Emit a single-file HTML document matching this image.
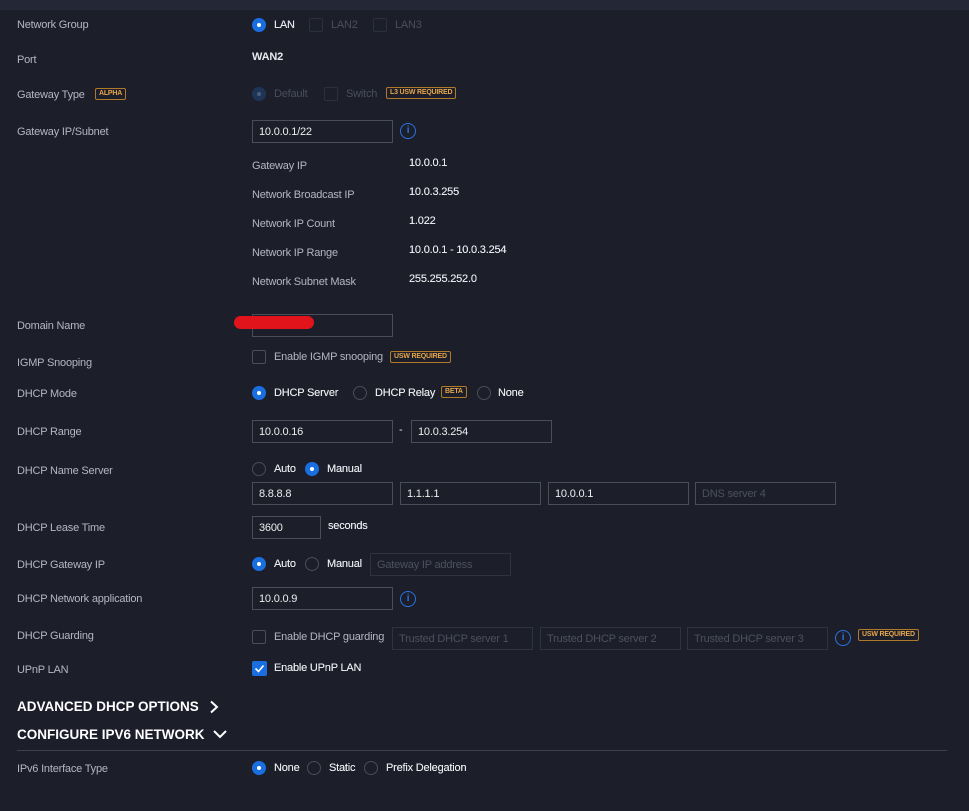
<!DOCTYPE html>
<html><head><meta charset="utf-8"><style>
*{box-sizing:border-box;margin:0;padding:0}
body{width:969px;height:811px;background:#1c1e2a;font-family:"Liberation Sans",sans-serif;font-size:11px;color:#e8e9ee;position:relative;overflow:hidden;letter-spacing:-0.2px}
.top{position:absolute;left:0;top:0;width:969px;height:10px;background:#242735}
.a{position:absolute;line-height:14px;white-space:nowrap}
.l{color:#b4b7c2}
.d{color:#4a4d5c}
.v{font-weight:500;text-shadow:0 0 0.3px #fff}
.in{position:absolute;height:23px;border:1px solid #4a4d5a;background:#1c1e2a;padding:2px 0 0 6px;line-height:19px;color:#eee;font-size:11px}
.in.ph{color:#4d505e;border-color:#2f3240}
.r{position:absolute;width:14px;height:14px;border-radius:50%;border:1px solid #4a4d5a}
.r.on{background:#1a6fe0;border:none}
.r.on::after{content:"";position:absolute;left:5px;top:5px;width:4px;height:4px;border-radius:50%;background:#fff}
.r.dison{background:#1f3558;border:none}
.r.dison::after{content:"";position:absolute;left:5px;top:5px;width:4px;height:4px;border-radius:50%;background:#4c5e7c}
.c{position:absolute;width:14px;height:14px;border:1px solid #4a4d5a;border-radius:2px}
.c.dis{border-color:#2c2f3c}
.b{position:absolute;height:12px;border:1px solid #b07a2a;border-radius:2px;color:#e6a64a;font-size:7px;font-weight:bold;line-height:10px;padding:0 3px;display:flex;align-items:center}
.i{position:absolute;width:16px;height:16px;border-radius:50%;border:1px solid #2a74e0;color:#2a74e0;font-size:10px;text-align:center;line-height:14px;font-weight:bold}
.h{position:absolute;font-size:13.5px;font-weight:bold;color:#fff;letter-spacing:0}
</style></head><body>
<div class="top"></div>

<div class="a l" style="left:17px;top:18px">Network Group</div>
<div class="r on" style="left:252px;top:18px"></div><div class="a v" style="left:274px;top:18px">LAN</div>
<div class="c dis" style="left:309px;top:18px"></div><div class="a d" style="left:331px;top:18px">LAN2</div>
<div class="c dis" style="left:373px;top:18px"></div><div class="a d" style="left:395px;top:18px">LAN3</div>

<div class="a l" style="left:17px;top:53px">Port</div>
<div class="a" style="left:252px;top:50px;font-weight:bold">WAN2</div>

<div class="a l" style="left:17px;top:88px">Gateway Type</div>
<div class="b" style="left:95px;top:88px">ALPHA</div>
<div class="r dison" style="left:252px;top:87px"></div><div class="a d" style="left:274px;top:87px">Default</div>
<div class="c dis" style="left:324px;top:87px"></div><div class="a d" style="left:346px;top:87px">Switch</div>
<div class="b" style="left:386px;top:87px">L3 USW REQUIRED</div>

<div class="a l" style="left:17px;top:125px">Gateway IP/Subnet</div>
<div class="in" style="left:252px;top:120px;width:141px">10.0.0.1/22</div>
<div class="i" style="left:400px;top:123px">i</div>

<div class="a l" style="left:252px;top:159px">Gateway IP</div><div class="a v" style="left:409px;top:156px">10.0.0.1</div>
<div class="a l" style="left:252px;top:188px">Network Broadcast IP</div><div class="a v" style="left:409px;top:185px">10.0.3.255</div>
<div class="a l" style="left:252px;top:217px">Network IP Count</div><div class="a v" style="left:409px;top:214px">1.022</div>
<div class="a l" style="left:252px;top:246px">Network IP Range</div><div class="a v" style="left:409px;top:243px">10.0.0.1 - 10.0.3.254</div>
<div class="a l" style="left:252px;top:275px">Network Subnet Mask</div><div class="a v" style="left:409px;top:272px">255.255.252.0</div>

<div class="a l" style="left:17px;top:319px">Domain Name</div>
<div class="in" style="left:252px;top:314px;width:141px"></div>
<div style="position:absolute;left:234px;top:316px;width:80px;height:13px;border-radius:7px;background:#e0141a"></div>

<div class="a l" style="left:17px;top:356px">IGMP Snooping</div>
<div class="c" style="left:252px;top:350px"></div><div class="a l" style="left:274px;top:350px">Enable IGMP snooping</div>
<div class="b" style="left:390px;top:351px">USW REQUIRED</div>

<div class="a l" style="left:17px;top:387px">DHCP Mode</div>
<div class="r on" style="left:252px;top:386px"></div><div class="a v" style="left:274px;top:386px">DHCP Server</div>
<div class="r" style="left:353px;top:386px"></div><div class="a v" style="left:375px;top:386px">DHCP Relay</div>
<div class="b" style="left:441px;top:386px">BETA</div>
<div class="r" style="left:477px;top:386px"></div><div class="a v" style="left:498px;top:386px">None</div>

<div class="a l" style="left:17px;top:425px">DHCP Range</div>
<div class="in" style="left:252px;top:420px;width:141px">10.0.0.16</div>
<div class="a" style="left:399px;top:423px">-</div>
<div class="in" style="left:411px;top:420px;width:141px">10.0.3.254</div>

<div class="a l" style="left:17px;top:464px">DHCP Name Server</div>
<div class="r" style="left:252px;top:462px"></div><div class="a v" style="left:274px;top:462px">Auto</div>
<div class="r on" style="left:305px;top:462px"></div><div class="a v" style="left:327px;top:462px">Manual</div>
<div class="in" style="left:252px;top:482px;width:141px">8.8.8.8</div>
<div class="in" style="left:400px;top:482px;width:141px">1.1.1.1</div>
<div class="in" style="left:548px;top:482px;width:141px">10.0.0.1</div>
<div class="in ph" style="left:695px;top:482px;width:141px;border-color:#4a4d5a">DNS server 4</div>

<div class="a l" style="left:17px;top:521px">DHCP Lease Time</div>
<div class="in" style="left:252px;top:516px;width:69px">3600</div>
<div class="a v" style="left:328px;top:519px">seconds</div>

<div class="a l" style="left:17px;top:558px">DHCP Gateway IP</div>
<div class="r on" style="left:252px;top:557px"></div><div class="a v" style="left:274px;top:557px">Auto</div>
<div class="r" style="left:305px;top:557px"></div><div class="a v" style="left:327px;top:557px">Manual</div>
<div class="in ph" style="left:370px;top:553px;width:141px">Gateway IP address</div>

<div class="a l" style="left:17px;top:592px">DHCP Network application</div>
<div class="in" style="left:252px;top:587px;width:141px">10.0.0.9</div>
<div class="i" style="left:400px;top:591px">i</div>

<div class="a l" style="left:17px;top:629px">DHCP Guarding</div>
<div class="c" style="left:252px;top:630px"></div><div class="a l" style="left:274px;top:630px">Enable DHCP guarding</div>
<div class="in ph" style="left:392px;top:627px;width:141px">Trusted DHCP server 1</div>
<div class="in ph" style="left:540px;top:627px;width:141px">Trusted DHCP server 2</div>
<div class="in ph" style="left:687px;top:627px;width:141px">Trusted DHCP server 3</div>
<div class="i" style="left:835px;top:630px">i</div>
<div class="b" style="left:858px;top:629px">USW REQUIRED</div>

<div class="a l" style="left:17px;top:663px">UPnP LAN</div>
<div style="position:absolute;left:252px;top:661px;width:15px;height:15px;background:#1a6fe0;border-radius:2px"><svg width="15" height="15"><path d="M3.5 7.5l3 3 5-6" stroke="#fff" stroke-width="1.6" fill="none"/></svg></div>
<div class="a v" style="left:274px;top:661px">Enable UPnP LAN</div>

<div class="h" style="left:17px;top:699px">ADVANCED DHCP OPTIONS</div>
<svg style="position:absolute;left:208px;top:700px" width="12" height="14"><path d="M3 1.5l6 5.5-6 5.5" stroke="#fff" stroke-width="2" fill="none"/></svg>
<div class="h" style="left:17px;top:727px">CONFIGURE IPV6 NETWORK</div>
<svg style="position:absolute;left:212px;top:728px" width="16" height="12"><path d="M2 3l6 6 6-6" stroke="#fff" stroke-width="2" fill="none"/></svg>
<div style="position:absolute;left:17px;top:750px;width:930px;height:1px;background:#3e4150"></div>

<div class="a l" style="left:17px;top:762px">IPv6 Interface Type</div>
<div class="r on" style="left:252px;top:761px"></div><div class="a v" style="left:274px;top:761px">None</div>
<div class="r" style="left:307px;top:761px"></div><div class="a v" style="left:329px;top:761px">Static</div>
<div class="r" style="left:364px;top:761px"></div><div class="a v" style="left:386px;top:761px">Prefix Delegation</div>
</body></html>
